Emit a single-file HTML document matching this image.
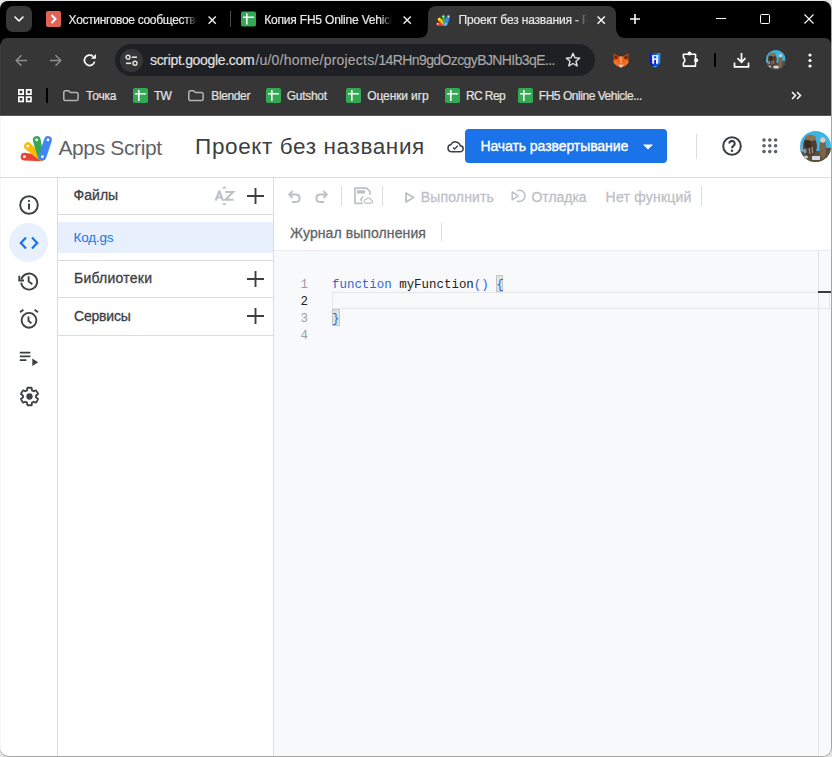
<!DOCTYPE html>
<html><head><meta charset="utf-8">
<style>
html,body{margin:0;padding:0;}
body{width:832px;height:757px;overflow:hidden;position:relative;background:#e4e4e4;font-family:"Liberation Sans",sans-serif;}
.a{position:absolute;}
.t{position:absolute;white-space:pre;}
svg{position:absolute;overflow:visible;}
#win{position:absolute;left:0;top:1px;width:831px;height:755px;border-radius:8px;overflow:hidden;background:#000;}
</style></head><body>
<!-- window outer border right/bottom -->
<div class="a" style="left:0;top:1px;width:832px;height:756px;border-radius:9px;background:#a6a6a6;"></div>
<div id="win">
</div>
<div class="a" id="page" style="left:0;top:0;width:832px;height:757px;">
  <!-- toolbar bg -->
  <div class="a" style="left:1px;top:38px;width:830px;height:77px;background:#363636;border-radius:6px 6px 0 0;"></div>
  <div class="a" style="left:0;top:44px;width:1px;height:71px;background:#3b3b3b;"></div>
  <!-- active tab -->
  <div class="a" style="left:428px;top:6px;width:188px;height:34px;background:#363636;border-radius:8px 8px 0 0;"></div>
  <svg style="left:418px;top:28px" width="10" height="10"><path d="M0 10 Q10 10 10 0 L10 10 Z" fill="#363636"/></svg>
  <svg style="left:616px;top:28px" width="10" height="10"><path d="M0 0 Q0 10 10 10 L0 10 Z" fill="#363636"/></svg>
  <!-- toolbar bottom line -->
  <div class="a" style="left:0;top:115px;width:831px;height:1px;background:#5a5a5a;"></div>
  <!-- page white -->
  <div class="a" style="left:0;top:116px;width:831px;height:640px;background:#fff;border-radius:0 0 8px 8px;overflow:hidden;">
    <div class="a" style="left:0;top:0;width:1px;height:640px;background:#f6f6f6;"></div>
    <!-- header border -->
    <div class="a" style="left:0;top:61px;width:831px;height:1px;background:#dadce0;"></div>
    <!-- sidebar border -->
    <div class="a" style="left:57px;top:62px;width:1px;height:580px;background:#dadce0;"></div>
    <!-- panel border -->
    <div class="a" style="left:273px;top:62px;width:1px;height:580px;background:#dadce0;"></div>
    <!-- file panel dividers -->
    <div class="a" style="left:58px;top:98px;width:215px;height:1px;background:#dadce0;"></div>
    <div class="a" style="left:58px;top:106px;width:215px;height:31px;background:#e8f0fe;"></div>
    <div class="a" style="left:58px;top:144px;width:215px;height:1px;background:#dadce0;"></div>
    <div class="a" style="left:58px;top:181px;width:215px;height:1px;background:#dadce0;"></div>
    <div class="a" style="left:58px;top:219px;width:215px;height:1px;background:#dadce0;"></div>
    <!-- editor area -->
    <div class="a" style="left:274px;top:134px;width:557px;height:1px;background:#e8eaed;"></div>
    <div class="a" style="left:274px;top:135px;width:557px;height:510px;background:#f8f9fa;"></div>
    <div class="a" style="left:818px;top:135px;width:1px;height:510px;background:#e3e3e3;"></div>
    <!-- current line box -->
    <div class="a" style="left:332px;top:175.5px;width:496px;height:15px;border:1px solid #e6e6e6;"></div>
    <div class="a" style="left:818px;top:175px;width:13px;height:2px;background:#3c3c3c;"></div>
    <!-- bracket boxes -->
    <div class="a" style="left:496px;top:158.5px;width:7px;height:17px;border:1px solid #c4c7c4;background:#e1e4e1;box-sizing:border-box;"></div>
    <div class="a" style="left:332px;top:192.5px;width:7.5px;height:17px;border:1px solid #c4c7c4;background:#e1e4e1;box-sizing:border-box;"></div>
    <!-- code icon bg -->
    <div class="a" style="left:9px;top:107px;width:39px;height:39px;border-radius:50%;background:#e8f0fe;"></div>
    <!-- header separator -->
    <div class="a" style="left:696px;top:18px;width:1px;height:25px;background:#dadce0;"></div>
    <!-- deploy button -->
    <div class="a" style="left:465px;top:13px;width:202px;height:34px;border-radius:4px;background:#1a73e8;"></div>
    <!-- editor toolbar separators -->
    <div class="a" style="left:341px;top:70px;width:1px;height:20px;background:#dadce0;"></div>
    <div class="a" style="left:382px;top:70px;width:1px;height:20px;background:#dadce0;"></div>
    <div class="a" style="left:701px;top:70px;width:1px;height:20px;background:#dadce0;"></div>
    <div class="a" style="left:441px;top:107px;width:1px;height:18px;background:#dadce0;"></div>
  </div>

  <!-- ======= TAB STRIP ICONS ======= -->
  <div class="a" style="left:6px;top:6px;width:26px;height:26px;border-radius:7px;background:#383838;"></div>
  <svg style="left:14px;top:16px" width="10" height="6"><path d="M1 1 L5 5 L9 1" stroke="#fff" stroke-width="1.6" fill="none" stroke-linecap="round" stroke-linejoin="round"/></svg>
  <!-- tab1 favicon -->
  <div class="a" style="left:46px;top:11px;width:15px;height:16px;border-radius:2px;background:#e06455;"></div>
  <svg style="left:46px;top:11px" width="15" height="16"><path d="M5.5 4 L9.5 8 L5.5 12" stroke="#fff" stroke-width="2" fill="none"/></svg>
  <svg style="left:208px;top:15.5px" width="9" height="9"><path d="M0.6 0.6 L7.8 7.8 M7.8 0.6 L0.6 7.8" stroke="#f0f0f0" stroke-width="1.4"/></svg>
  <div class="a" style="left:230px;top:11px;width:1px;height:16px;background:#4a4a4a;"></div>
  <!-- sheets favicon tab2 -->
  <svg style="left:241px;top:11px" width="15" height="16"><rect x="0" y="0.5" width="15" height="15" rx="1.8" fill="#34a853"/><path d="M5.8 2.5 V13.5 M2 6.2 H13" stroke="#fff" stroke-width="1.6"/></svg>
  <svg style="left:402.8px;top:15.5px" width="9" height="9"><path d="M0.6 0.6 L7.8 7.8 M7.8 0.6 L0.6 7.8" stroke="#f0f0f0" stroke-width="1.4"/></svg>
  <!-- apps script favicon tab3 -->
  <svg style="left:434px;top:12px" width="18" height="15.75" viewBox="0 0 40 35">
    <path d="M8.04 30.58 L24.53 31.19 A3.0 3.0 0 0 0 25.07 25.21 L8.76 22.82 A3.9 3.9 0 0 0 8.04 30.58 Z" fill="#ea4335"/><path d="M9.22 19.02 L22.81 29.85 A3.0 3.0 0 0 0 26.79 25.35 L14.38 13.18 A3.9 3.9 0 0 0 9.22 19.02 Z" fill="#fbbc04"/><path d="M16.91 10.81 L21.88 27.70 A3.0 3.0 0 0 0 27.72 26.30 L24.49 8.99 A3.9 3.9 0 0 0 16.91 10.81 Z" fill="#34a853"/><path d="M28.30 8.67 L22.70 25.47 A3.9 3.9 0 0 0 30.10 27.93 L35.70 11.13 A3.9 3.9 0 0 0 28.30 8.67 Z" fill="#4285f4"/>
    <g fill="#fff"><circle cx="8.4" cy="26.7" r="1.6"/><circle cx="11.8" cy="16.1" r="1.6"/><circle cx="20.7" cy="9.9" r="1.6"/><circle cx="32" cy="9.9" r="1.6"/><circle cx="26.4" cy="26.7" r="1.6"/></g>
  </svg>
  <svg style="left:596.8px;top:15.5px" width="9" height="9"><path d="M0.6 0.6 L7.8 7.8 M7.8 0.6 L0.6 7.8" stroke="#fff" stroke-width="1.4"/></svg>
  <svg style="left:630px;top:14px" width="10" height="10"><path d="M5 0 V10 M0 5 H10" stroke="#fff" stroke-width="1.6"/></svg>
  <!-- window controls -->
  <div class="a" style="left:716px;top:18px;width:10px;height:1px;background:#fff;"></div>
  <div class="a" style="left:760px;top:14px;width:8px;height:8px;border:1px solid #fff;border-radius:1.5px;"></div>
  <svg style="left:804px;top:14px" width="10" height="10"><path d="M0.5 0.5 L9.5 9.5 M9.5 0.5 L0.5 9.5" stroke="#fff" stroke-width="1.1"/></svg>

  <!-- ======= TOOLBAR ======= -->
  <svg style="left:15px;top:54px" width="13" height="13"><path d="M12 6.5 H1.5 M6.5 1.2 L1.2 6.5 L6.5 11.8" stroke="#8e8e8e" stroke-width="1.5" fill="none"/></svg>
  <svg style="left:49px;top:54px" width="13" height="13"><path d="M1 6.5 H11.5 M6.5 1.2 L11.8 6.5 L6.5 11.8" stroke="#8e8e8e" stroke-width="1.5" fill="none"/></svg>
  <svg style="left:83px;top:53px" width="14" height="14"><path d="M11.62 8.65 A5.2 5.2 0 1 1 9.94 3.32" stroke="#fff" stroke-width="1.7" fill="none"/><path d="M8 5.7 L12.9 5.7 L12.9 1 Z" fill="#fff"/></svg>
  <!-- omnibox -->
  <div class="a" style="left:115px;top:44px;width:480px;height:32px;border-radius:16px;background:#1f2023;"></div>
  <div class="a" style="left:120px;top:49px;width:23px;height:23px;border-radius:50%;background:#363636;"></div>
  <svg style="left:125px;top:54px" width="13" height="13">
    <circle cx="3" cy="3.2" r="2" stroke="#e3e3e3" stroke-width="1.4" fill="none"/><path d="M6.8 3.2 H12" stroke="#e3e3e3" stroke-width="1.6"/>
    <circle cx="10" cy="9.3" r="2" stroke="#e3e3e3" stroke-width="1.4" fill="none"/><path d="M1 9.3 H6.2" stroke="#e3e3e3" stroke-width="1.6"/>
  </svg>
  <svg style="left:565px;top:52px" width="16" height="16"><path d="M8 1.3 L9.9 5.8 L14.7 6.2 L11 9.3 L12.2 14 L8 11.5 L3.8 14 L5 9.3 L1.3 6.2 L6.1 5.8 Z" stroke="#e3e3e3" stroke-width="1.4" fill="none" stroke-linejoin="round"/></svg>
  <!-- metamask fox -->
  <svg style="left:613px;top:53.3px" width="16" height="15" viewBox="0 0 16 15">
    <path d="M0.6 0.4 L6 3.6 H10 L15.4 0.4 L15.2 5 L15.5 10 L12.5 12.8 L8 14.8 L3.5 12.8 L0.5 10 L0.8 5 Z" fill="#f06a1f"/>
    <path d="M0.6 0.4 L6 3.6 L4.6 6.5 L1 6.5 Z M15.4 0.4 L10 3.6 L11.4 6.5 L15 6.5 Z" fill="#b8400c"/>
    <path d="M1.6 2.2 L4.8 4.2 L3.6 6 L1.8 5.6 Z M14.4 2.2 L11.2 4.2 L12.4 6 L14.2 5.6 Z" fill="#6e1e04"/>
    <path d="M6.8 3.6 H9.2 L9 10 H7 Z" fill="#f89258"/>
    <path d="M0.5 8 L4 9.5 L3.5 12.5 Z M15.5 8 L12 9.5 L12.5 12.5 Z" fill="#ff7a22"/>
    <path d="M4.6 7.4 L6.4 8 L5.6 9 Z M11.4 7.4 L9.6 8 L10.4 9 Z" fill="#b84a10"/>
    <path d="M5.2 12 L8 11 L10.8 12 L8 14.8 Z" fill="#cfd0d2"/>
    <path d="M7.2 11 H8.8 L8 12 Z" fill="#c0501a"/>
  </svg>
  <!-- ronin shield -->
  <svg style="left:645px;top:50px" width="20" height="20" viewBox="0 0 20 20">
    <defs><linearGradient id="shg" x1="0" y1="0.3" x2="1" y2="0"><stop offset="0" stop-color="#0b12dc"/><stop offset="0.6" stop-color="#1a5cf0"/><stop offset="1" stop-color="#18b6f6"/></linearGradient></defs>
    <path d="M4.9 2.9 H15.3 V13.4 L10.1 17.4 L4.9 13.4 Z" fill="url(#shg)"/>
    <path d="M7.4 16 L10.1 17.4 L12.8 16 Z" fill="#22b8f5"/>
    <path d="M7.1 4.9 H13.3 V13.3 L11.2 14.2 H9 L7.1 13.3 Z" fill="#e4f2ff"/>
    <circle cx="10.1" cy="7.3" r="1.25" fill="#1a5cf0"/>
    <rect x="9.2" y="10" width="1.8" height="4.6" fill="#0b18e0"/>
  </svg>
  <!-- extensions puzzle -->
  <svg style="left:678px;top:48px" width="24" height="24" viewBox="0 0 24 24">
    <path d="M5.4 6.2 H17.5 V18.1 H5.4 V15 Q8.3 12.2 5.4 9.4 Z" stroke="#fff" stroke-width="1.6" fill="none" stroke-linejoin="round"/>
    <circle cx="11.5" cy="5.6" r="2" fill="#fff"/><circle cx="18.1" cy="12.2" r="2" fill="#fff"/>
  </svg>
  <div class="a" style="left:714px;top:53px;width:2px;height:14px;background:#000;"></div>
  <!-- download -->
  <svg style="left:733px;top:52px" width="17" height="16" viewBox="0 0 17 16">
    <path d="M8.5 1 V10 M4.5 6.2 L8.5 10.2 L12.5 6.2" stroke="#fff" stroke-width="1.7" fill="none"/>
    <path d="M1.5 10.5 V14.8 H15.5 V10.5" stroke="#fff" stroke-width="1.7" fill="none"/>
  </svg>
  <!-- avatar small -->
  <svg style="left:766px;top:50.3px" width="19.6" height="19.6" viewBox="0 0 31 31"><clipPath id="avc1"><circle cx="15.5" cy="15.5" r="15.5"/></clipPath><g clip-path="url(#avc1)">
<rect x="0" y="0" width="31" height="31" fill="#3cb4e1"/>
<rect x="0" y="20" width="31" height="11" fill="#5e4d3c"/>
<ellipse cx="4" cy="17" rx="4" ry="4" fill="#7aa9c4"/>
<ellipse cx="10" cy="15" rx="7" ry="10" fill="#4f3c2c"/>
<ellipse cx="10.5" cy="7" rx="5.5" ry="3.2" fill="#8a7450"/><ellipse cx="5" cy="20" rx="1.6" ry="2.6" fill="#6f9fbf"/><path d="M9 17 L10 23 M12 16 L12.5 22" stroke="#c8c0b0" stroke-width="0.8"/>
<ellipse cx="8" cy="13" rx="3" ry="4" fill="#3a2a20"/>
<ellipse cx="22.8" cy="18" rx="3.4" ry="10" fill="#7a654c"/>
<ellipse cx="22.8" cy="9" rx="2.6" ry="2.8" fill="#d6d0c0"/>
<rect x="12" y="25" width="8" height="4" fill="#d5dbe0"/>
<ellipse cx="6" cy="26" rx="2" ry="1.5" fill="#c8ccd0"/>
<rect x="26" y="17" width="5" height="10" fill="#5d4c3c"/>
</g></svg>
  <svg style="left:808px;top:53px" width="4" height="15"><circle cx="2" cy="2" r="1.6" fill="#fff"/><circle cx="2" cy="7.5" r="1.6" fill="#fff"/><circle cx="2" cy="13" r="1.6" fill="#fff"/></svg>

  <!-- ======= BOOKMARKS ======= -->
  <svg style="left:18px;top:89px" width="14" height="14"><g stroke="#fff" stroke-width="1.7" fill="none"><rect x="0.85" y="0.85" width="4.3" height="4.3"/><rect x="8.65" y="0.85" width="4.3" height="4.3"/><rect x="0.85" y="8.15" width="4.3" height="4.3"/><rect x="8.65" y="8.15" width="4.3" height="4.3"/></g></svg>
  <div class="a" style="left:46px;top:88px;width:2px;height:15px;background:#000;"></div>
  <svg style="left:63px;top:90px" width="16" height="12"><path d="M2.5 0.8 H5.6 L7.3 2.5 H13.4 Q15.1 2.5 15.1 4.2 V8.9 Q15.1 10.6 13.4 10.6 H2.5 Q0.8 10.6 0.8 8.9 V2.5 Q0.8 0.8 2.5 0.8 Z" stroke="#b4b4b4" stroke-width="1.5" fill="none" stroke-linejoin="round"/></svg>
  <svg style="left:188px;top:90px" width="16" height="12"><path d="M2.5 0.8 H5.6 L7.3 2.5 H13.4 Q15.1 2.5 15.1 4.2 V8.9 Q15.1 10.6 13.4 10.6 H2.5 Q0.8 10.6 0.8 8.9 V2.5 Q0.8 0.8 2.5 0.8 Z" stroke="#b4b4b4" stroke-width="1.5" fill="none" stroke-linejoin="round"/></svg>
  <svg style="left:132.5px;top:88px" width="15" height="15"><rect x="0" y="0" width="15" height="15" rx="1.8" fill="#34a853"/><path d="M5.8 2 V13 M2 5.7 H13" stroke="#fff" stroke-width="1.6"/></svg>
  <svg style="left:265.5px;top:88px" width="15" height="15"><rect x="0" y="0" width="15" height="15" rx="1.8" fill="#34a853"/><path d="M5.8 2 V13 M2 5.7 H13" stroke="#fff" stroke-width="1.6"/></svg>
  <svg style="left:346px;top:88px" width="15" height="15"><rect x="0" y="0" width="15" height="15" rx="1.8" fill="#34a853"/><path d="M5.8 2 V13 M2 5.7 H13" stroke="#fff" stroke-width="1.6"/></svg>
  <svg style="left:444.8px;top:88px" width="15" height="15"><rect x="0" y="0" width="15" height="15" rx="1.8" fill="#34a853"/><path d="M5.8 2 V13 M2 5.7 H13" stroke="#fff" stroke-width="1.6"/></svg>
  <svg style="left:517.5px;top:88px" width="15" height="15"><rect x="0" y="0" width="15" height="15" rx="1.8" fill="#34a853"/><path d="M5.8 2 V13 M2 5.7 H13" stroke="#fff" stroke-width="1.6"/></svg>
  <svg style="left:791px;top:91px" width="11" height="9"><path d="M1 1 L4.5 4.5 L1 8 M6 1 L9.5 4.5 L6 8" stroke="#fff" stroke-width="1.5" fill="none"/></svg>

  <!-- ======= APPS SCRIPT HEADER ======= -->
  <svg style="left:16px;top:130px" width="40" height="35" viewBox="0 0 40 35">
    <path d="M8.04 30.58 L24.53 31.19 A3.0 3.0 0 0 0 25.07 25.21 L8.76 22.82 A3.9 3.9 0 0 0 8.04 30.58 Z" fill="#ea4335"/><path d="M9.22 19.02 L22.81 29.85 A3.0 3.0 0 0 0 26.79 25.35 L14.38 13.18 A3.9 3.9 0 0 0 9.22 19.02 Z" fill="#fbbc04"/><path d="M16.91 10.81 L21.88 27.70 A3.0 3.0 0 0 0 27.72 26.30 L24.49 8.99 A3.9 3.9 0 0 0 16.91 10.81 Z" fill="#34a853"/><path d="M28.30 8.67 L22.70 25.47 A3.9 3.9 0 0 0 30.10 27.93 L35.70 11.13 A3.9 3.9 0 0 0 28.30 8.67 Z" fill="#4285f4"/>
    <g fill="#fff"><circle cx="8.4" cy="26.7" r="1.4"/><circle cx="11.8" cy="16.1" r="1.4"/><circle cx="20.7" cy="9.9" r="1.4"/><circle cx="32" cy="9.9" r="1.4"/><circle cx="26.4" cy="26.7" r="1.4"/></g>
  </svg>
  <!-- cloud -->
  <svg style="left:447px;top:140px" width="17" height="13" viewBox="0 0 17 13">
    <path d="M4.2 11.8 H13 A3 3 0 0 0 13.3 5.8 A5 5 0 0 0 4 4.5 A3.7 3.7 0 0 0 4.2 11.8 Z" stroke="#3c4043" stroke-width="1.5" fill="none"/>
    <path d="M6 7.5 L7.6 9 L10.8 5.8" stroke="#3c4043" stroke-width="1.4" fill="none"/>
  </svg>
  <svg style="left:643px;top:144px" width="11" height="6"><path d="M0 0.5 H10 L5 5.5 Z" fill="#fff"/></svg>
  <!-- help -->
  <svg style="left:722px;top:136px" width="20" height="20" viewBox="0 0 20 20">
    <circle cx="10" cy="10" r="8.8" stroke="#3c4043" stroke-width="2" fill="none"/>
    <path d="M7.3 7.6 A2.7 2.7 0 1 1 11.4 9.9 C10.4 10.6 10 11.1 10 12.3" stroke="#3c4043" stroke-width="2.1" fill="none"/>
    <circle cx="10" cy="14.7" r="1.25" fill="#3c4043"/>
  </svg>
  <!-- apps grid -->
  <svg style="left:761.9px;top:138.4px" width="16" height="16" fill="#5f6368"><circle cx="2" cy="2" r="1.8"/><circle cx="7.8" cy="2" r="1.8"/><circle cx="13.6" cy="2" r="1.8"/><circle cx="2" cy="7.8" r="1.8"/><circle cx="7.8" cy="7.8" r="1.8"/><circle cx="13.6" cy="7.8" r="1.8"/><circle cx="2" cy="13.6" r="1.8"/><circle cx="7.8" cy="13.6" r="1.8"/><circle cx="13.6" cy="13.6" r="1.8"/></svg>
  <!-- avatar big -->
  <svg style="left:800.3px;top:130.6px" width="31" height="31" viewBox="0 0 31 31"><clipPath id="avc2"><circle cx="15.5" cy="15.5" r="15.5"/></clipPath><g clip-path="url(#avc2)">
<rect x="0" y="0" width="31" height="31" fill="#3cb4e1"/>
<rect x="0" y="20" width="31" height="11" fill="#5e4d3c"/>
<ellipse cx="4" cy="17" rx="4" ry="4" fill="#7aa9c4"/>
<ellipse cx="10" cy="15" rx="7" ry="10" fill="#4f3c2c"/>
<ellipse cx="10.5" cy="7" rx="5.5" ry="3.2" fill="#8a7450"/><ellipse cx="5" cy="20" rx="1.6" ry="2.6" fill="#6f9fbf"/><path d="M9 17 L10 23 M12 16 L12.5 22" stroke="#c8c0b0" stroke-width="0.8"/>
<ellipse cx="8" cy="13" rx="3" ry="4" fill="#3a2a20"/>
<ellipse cx="22.8" cy="18" rx="3.4" ry="10" fill="#7a654c"/>
<ellipse cx="22.8" cy="9" rx="2.6" ry="2.8" fill="#d6d0c0"/>
<rect x="12" y="25" width="8" height="4" fill="#d5dbe0"/>
<ellipse cx="6" cy="26" rx="2" ry="1.5" fill="#c8ccd0"/>
<rect x="26" y="17" width="5" height="10" fill="#5d4c3c"/>
</g></svg>
  

  <!-- ======= SIDEBAR ICONS ======= -->
  <svg style="left:18.5px;top:195px" width="20" height="20" viewBox="0 0 20 20">
    <circle cx="10" cy="10" r="8.8" stroke="#3c4043" stroke-width="1.9" fill="none"/>
    <path d="M10 8.5 V14.5" stroke="#3c4043" stroke-width="2"/><circle cx="10" cy="5.9" r="1.1" fill="#3c4043"/>
  </svg>
  <svg style="left:19px;top:236px" width="20" height="14" viewBox="0 0 20 14">
    <path d="M7 1.5 L1.8 7 L7 12.5 M13 1.5 L18.2 7 L13 12.5" stroke="#1a73e8" stroke-width="2.2" fill="none"/>
  </svg>
  <svg style="left:18.5px;top:271px" width="20" height="20" viewBox="0 0 20 20">
    <path d="M2.4 8.5 A8 8 0 1 1 2.2 11.6" stroke="#3c4043" stroke-width="1.9" fill="none"/>
    <path d="M0.3 4.8 V9.5 H5" stroke="#3c4043" stroke-width="1.9" fill="none"/>
    <path d="M9.6 5.2 V10.4 L13.3 13.3" stroke="#3c4043" stroke-width="1.9" fill="none"/>
  </svg>
  <svg style="left:18.5px;top:309px" width="20" height="20" viewBox="0 0 20 20">
    <circle cx="10" cy="11.3" r="7.4" stroke="#3c4043" stroke-width="1.9" fill="none"/>
    <path d="M1 3.3 L4.4 0.8 M19 3.3 L15.6 0.8" stroke="#3c4043" stroke-width="1.9"/>
    <path d="M9.5 7.5 V11.8 L12.4 14.4" stroke="#3c4043" stroke-width="1.9" fill="none"/>
  </svg>
  <svg style="left:19px;top:351px" width="21" height="17" viewBox="0 0 21 17">
    <path d="M0.8 1.7 H11.4 M0.8 5.4 H11.4 M0.8 9.1 H7.4" stroke="#3c4043" stroke-width="1.8"/>
    <path d="M13.3 7.5 L19.2 11.2 L13.3 15 Z" fill="#3c4043"/>
  </svg>
  <svg style="left:18.5px;top:385.5px" width="21" height="21" viewBox="0 0 24 24">
    <path d="M19.43 12.98c.04-.32.07-.64.07-.98s-.03-.66-.07-.98l2.11-1.65c.19-.15.24-.42.12-.64l-2-3.46c-.12-.22-.39-.3-.61-.22l-2.49 1c-.52-.4-1.08-.73-1.69-.98l-.38-2.65C14.46 2.18 14.25 2 14 2h-4c-.25 0-.46.18-.49.42l-.38 2.65c-.61.25-1.17.59-1.69.98l-2.49-1c-.23-.09-.49 0-.61.22l-2 3.46c-.13.22-.07.49.12.64l2.11 1.65c-.04.32-.07.65-.07.98s.03.66.07.98l-2.110 1.65c-.19.15-.24.42-.12.64l2 3.46c.12.22.39.3.61.22l2.49-1c.52.4 1.08.73 1.69.98l.38 2.65c.03.24.24.42.49.42h4c.25 0 .46-.18.49-.42l.38-2.65c.61-.25 1.17-.59 1.69-.98l2.49 1c.23.09.49 0 .61-.22l2-3.46c.12-.22.07-.49-.12-.64l-2.11-1.650z" stroke="#3c4043" stroke-width="2.1" fill="none"/>
    <circle cx="12" cy="12" r="3.6" fill="#3c4043"/>
  </svg>

  <!-- ======= FILE PANEL ICONS ======= -->
  <svg style="left:214px;top:186px" width="21" height="20" viewBox="0 0 21 20">
    <path d="M7.6 2.6 L10.3 0.2 L13 2.6 Z" fill="#bdc1c6"/>
    <path d="M7.6 17.2 L10.3 19.6 L13 17.2 Z" fill="#bdc1c6"/>
    <path d="M1.6 14.7 L5.3 5 L9 14.7 M2.9 11.5 H7.7" stroke="#bdc1c6" stroke-width="2.1" fill="none" stroke-linejoin="round"/>
    <path d="M11.2 6 H19.1 L11.4 13.7 H19.5" stroke="#bdc1c6" stroke-width="2.1" fill="none"/>
  </svg>
  <svg style="left:247px;top:188px" width="17" height="16"><path d="M8.5 0 V16 M0 8 H17" stroke="#3c4043" stroke-width="1.9"/></svg>
  <svg style="left:247px;top:271px" width="17" height="16"><path d="M8.5 0 V16 M0 8 H17" stroke="#3c4043" stroke-width="1.9"/></svg>
  <svg style="left:247px;top:308px" width="17" height="16"><path d="M8.5 0 V16 M0 8 H17" stroke="#3c4043" stroke-width="1.9"/></svg>

  <!-- ======= EDITOR TOOLBAR ICONS ======= -->
  <svg style="left:287.5px;top:189.5px" width="14" height="13" viewBox="0 0 14 13">
    <path d="M2 4.5 H8.5 A3.8 3.8 0 0 1 8.5 12 H4" stroke="#bdc1c6" stroke-width="1.9" fill="none"/>
    <path d="M4.5 1 L1.3 4.5 L4.5 8" stroke="#bdc1c6" stroke-width="1.9" fill="none"/>
  </svg>
  <svg style="left:314px;top:189.5px" width="14" height="13" viewBox="0 0 14 13">
    <path d="M12 4.5 H5.5 A3.8 3.8 0 0 0 5.5 12 H10" stroke="#bdc1c6" stroke-width="1.9" fill="none"/>
    <path d="M9.5 1 L12.7 4.5 L9.5 8" stroke="#bdc1c6" stroke-width="1.9" fill="none"/>
  </svg>
  <svg style="left:352px;top:186px" width="22" height="20" viewBox="0 0 22 20">
    <path d="M10.8 17.4 H3 V2.1 H14.5 L18 5.6 V8.7" stroke="#bdc1c6" stroke-width="1.7" fill="none"/>
    <rect x="5" y="4.2" width="8" height="3.4" fill="#bdc1c6"/>
    <path d="M11.3 10 Q7 12.3 9.6 15.8 Q9.2 12.6 11.3 10 Z" fill="#bdc1c6" stroke="#bdc1c6" stroke-width="0.8"/>
    <path d="M13.6 17.2 H19 A1.6 1.6 0 0 0 19.2 14 A2.9 2.9 0 0 0 14.3 13.1 A2.1 2.1 0 0 0 13.6 17.2 Z" stroke="#bdc1c6" stroke-width="1.2" fill="none"/>
  </svg>
  <svg style="left:404.5px;top:191.5px" width="10" height="11"><path d="M1 1 L8.6 5.5 L1 10 Z" stroke="#bdc1c6" stroke-width="1.8" fill="none" stroke-linejoin="round"/></svg>
  <svg style="left:505px;top:184px" width="24" height="24" viewBox="0 0 24 24">
    <path d="M12.03 6.82 A5.6 5.6 0 1 1 12.03 16.98" stroke="#bdc1c6" stroke-width="1.5" fill="none"/>
    <path d="M7.2 7.9 L13.3 11.9 L7.2 15.9 Z" stroke="#bdc1c6" stroke-width="1.5" fill="none" stroke-linejoin="round"/>
  </svg>
</div>
<div class="t" style="left:68.60px;top:14.34px;font-size:12px;line-height:12px;color:#e8e8e8;font-weight:400;font-family:'Liberation Sans', sans-serif;-webkit-text-stroke:0.2px #e8e8e8;width:128px;overflow:hidden;-webkit-mask-image:linear-gradient(to right,#000 116px,transparent 128px);letter-spacing:-0.33px;">Хостинговое сообщество Beget</div>
<div class="t" style="left:264.20px;top:14.34px;font-size:12px;line-height:12px;color:#e8e8e8;font-weight:400;font-family:'Liberation Sans', sans-serif;-webkit-text-stroke:0.2px #e8e8e8;width:128px;overflow:hidden;-webkit-mask-image:linear-gradient(to right,#000 116px,transparent 128px);letter-spacing:-0.19px;">Копия FH5 Online Vehicle Database</div>
<div class="t" style="left:458.60px;top:14.34px;font-size:12px;line-height:12px;color:#e8e8e8;font-weight:400;font-family:'Liberation Sans', sans-serif;-webkit-text-stroke:0.2px #e8e8e8;width:128px;overflow:hidden;-webkit-mask-image:linear-gradient(to right,#000 116px,transparent 128px);letter-spacing:-0.16px;">Проект без названия - Редактор Apps Script</div>
<div class="t" style="left:150.00px;top:53.15px;font-size:14px;line-height:14px;color:#e3e3e3;font-weight:400;font-family:'Liberation Sans', sans-serif;letter-spacing:-0.316px;-webkit-text-stroke:0.15px #e3e3e3;">script.google.com</div>
<div class="t" style="left:255.40px;top:53.15px;font-size:14px;line-height:14px;color:#a8a8a8;font-weight:400;font-family:'Liberation Sans', sans-serif;letter-spacing:0.213px;-webkit-text-stroke:0.15px #a8a8a8;">/u/0/home/projects/</div>
<div class="t" style="left:378.40px;top:53.15px;font-size:14px;line-height:14px;color:#a8a8a8;font-weight:400;font-family:'Liberation Sans', sans-serif;letter-spacing:-0.600px;-webkit-text-stroke:0.15px #a8a8a8;">14RHn9gdOzcgyBJNHIb3qE...</div>
<div class="t" style="left:86.00px;top:90.24px;font-size:12px;line-height:12px;color:#e3e3e3;font-weight:400;font-family:'Liberation Sans', sans-serif;letter-spacing:-0.192px;-webkit-text-stroke:0.2px #e3e3e3;">Точка</div>
<div class="t" style="left:153.90px;top:90.24px;font-size:12px;line-height:12px;color:#e3e3e3;font-weight:400;font-family:'Liberation Sans', sans-serif;letter-spacing:-0.600px;-webkit-text-stroke:0.2px #e3e3e3;">TW</div>
<div class="t" style="left:211.30px;top:90.24px;font-size:12px;line-height:12px;color:#e3e3e3;font-weight:400;font-family:'Liberation Sans', sans-serif;letter-spacing:-0.378px;-webkit-text-stroke:0.2px #e3e3e3;">Blender</div>
<div class="t" style="left:286.70px;top:90.24px;font-size:12px;line-height:12px;color:#e3e3e3;font-weight:400;font-family:'Liberation Sans', sans-serif;letter-spacing:-0.282px;-webkit-text-stroke:0.2px #e3e3e3;">Gutshot</div>
<div class="t" style="left:367.30px;top:90.24px;font-size:12px;line-height:12px;color:#e3e3e3;font-weight:400;font-family:'Liberation Sans', sans-serif;letter-spacing:-0.127px;-webkit-text-stroke:0.2px #e3e3e3;">Оценки игр</div>
<div class="t" style="left:466.00px;top:90.24px;font-size:12px;line-height:12px;color:#e3e3e3;font-weight:400;font-family:'Liberation Sans', sans-serif;letter-spacing:-0.600px;-webkit-text-stroke:0.2px #e3e3e3;">RC Rep</div>
<div class="t" style="left:538.80px;top:90.24px;font-size:12px;line-height:12px;color:#e3e3e3;font-weight:400;font-family:'Liberation Sans', sans-serif;letter-spacing:-0.464px;-webkit-text-stroke:0.2px #e3e3e3;">FH5 Online Vehicle...</div>
<div class="t" style="left:58.40px;top:136.72px;font-size:21px;line-height:21px;color:#5f6368;font-weight:400;font-family:'Liberation Sans', sans-serif;letter-spacing:-0.364px;">Apps Script</div>
<div class="t" style="left:195.10px;top:135.95px;font-size:22.5px;line-height:22.5px;color:#3c4043;font-weight:400;font-family:'Liberation Sans', sans-serif;letter-spacing:0.622px;">Проект без названия</div>
<div class="t" style="left:480.40px;top:138.65px;font-size:14px;line-height:14px;color:#ffffff;font-weight:400;font-family:'Liberation Sans', sans-serif;letter-spacing:-0.070px;-webkit-text-stroke:0.35px #ffffff;">Начать развертывание</div>
<div class="t" style="left:73.60px;top:188.15px;font-size:14px;line-height:14px;color:#3c4043;font-weight:400;font-family:'Liberation Sans', sans-serif;letter-spacing:0.020px;-webkit-text-stroke:0.3px #3c4043;">Файлы</div>
<div class="t" style="left:73.60px;top:230.57px;font-size:13.5px;line-height:13.5px;color:#1a73e8;font-weight:400;font-family:'Liberation Sans', sans-serif;letter-spacing:-0.222px;">Код.gs</div>
<div class="t" style="left:74.00px;top:271.15px;font-size:14px;line-height:14px;color:#3c4043;font-weight:400;font-family:'Liberation Sans', sans-serif;letter-spacing:0.241px;-webkit-text-stroke:0.3px #3c4043;">Библиотеки</div>
<div class="t" style="left:74.00px;top:308.55px;font-size:14px;line-height:14px;color:#3c4043;font-weight:400;font-family:'Liberation Sans', sans-serif;letter-spacing:-0.190px;-webkit-text-stroke:0.3px #3c4043;">Сервисы</div>
<div class="t" style="left:420.70px;top:189.65px;font-size:14px;line-height:14px;color:#bdc1c6;font-weight:400;font-family:'Liberation Sans', sans-serif;letter-spacing:0.163px;-webkit-text-stroke:0.3px #bdc1c6;">Выполнить</div>
<div class="t" style="left:531.50px;top:189.65px;font-size:14px;line-height:14px;color:#bdc1c6;font-weight:400;font-family:'Liberation Sans', sans-serif;letter-spacing:-0.042px;-webkit-text-stroke:0.3px #bdc1c6;">Отладка</div>
<div class="t" style="left:605.60px;top:189.65px;font-size:14px;line-height:14px;color:#bdc1c6;font-weight:400;font-family:'Liberation Sans', sans-serif;letter-spacing:0.221px;-webkit-text-stroke:0.3px #bdc1c6;">Нет функций</div>
<div class="t" style="left:290.10px;top:225.55px;font-size:14px;line-height:14px;color:#5f6368;font-weight:400;font-family:'Liberation Sans', sans-serif;letter-spacing:0.089px;-webkit-text-stroke:0.3px #5f6368;">Журнал выполнения</div>
<div class="t" style="left:300.40px;top:278.96px;font-size:12.45px;line-height:12.45px;color:#9aa0a6;font-weight:400;font-family:'Liberation Mono', monospace;">1</div>
<div class="t" style="left:300.40px;top:295.96px;font-size:12.45px;line-height:12.45px;color:#202124;font-weight:400;font-family:'Liberation Mono', monospace;">2</div>
<div class="t" style="left:300.40px;top:312.96px;font-size:12.45px;line-height:12.45px;color:#9aa0a6;font-weight:400;font-family:'Liberation Mono', monospace;">3</div>
<div class="t" style="left:300.40px;top:329.96px;font-size:12.45px;line-height:12.45px;color:#9aa0a6;font-weight:400;font-family:'Liberation Mono', monospace;">4</div>
<div class="t" style="left:332.00px;top:278.96px;font-size:12.45px;line-height:12.45px;color:#202124;font-weight:400;font-family:'Liberation Mono', monospace;"><span style="color:#3367d6">function</span> myFunction<span style="color:#3367d6">()</span> <span style="color:#3367d6">{</span></div>
<div class="t" style="left:332.00px;top:312.96px;font-size:12.45px;line-height:12.45px;color:#3367d6;font-weight:400;font-family:'Liberation Mono', monospace;">}</div>
</body></html>
